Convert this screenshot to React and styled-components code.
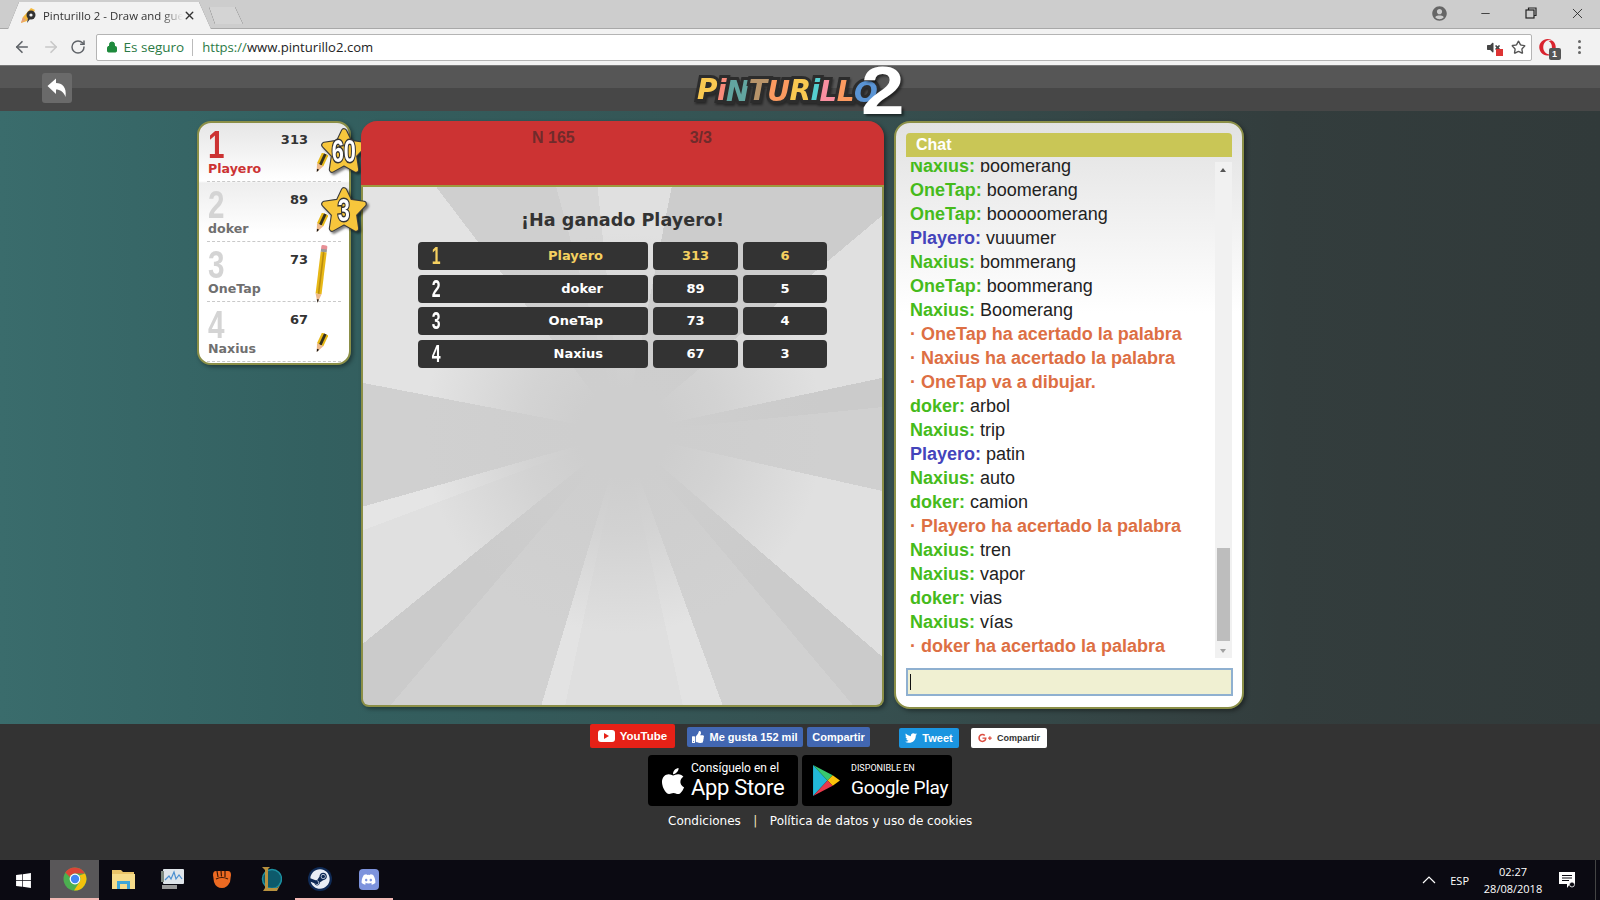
import styled, { createGlobalStyle } from "styled-components";
import { ArrowLeft, ArrowRight, RotateCw, Star as StarIcon, Lock, Minus, X } from "lucide-react";
import {
  FaThumbsUp,
  FaTwitter,
  FaApple,
  FaGooglePlusG,
  FaWindows,
  FaSteam,
  FaDiscord,
  FaUserCircle,
  FaOpera,
  FaVolumeMute,
} from "react-icons/fa";

const players = [
  { rank: 1, name: "Playero", score: 313, wins: 6, star: 60, pencil: "small" },
  { rank: 2, name: "doker", score: 89, wins: 5, star: 3, pencil: "small" },
  { rank: 3, name: "OneTap", score: 73, wins: 4, pencil: "long" },
  { rank: 4, name: "Naxius", score: 67, wins: 3, pencil: "small" },
];

const chat = [
  ["Naxius", "boomerang"],
  ["OneTap", "boomerang"],
  ["OneTap", "booooomerang"],
  ["Playero", "vuuumer"],
  ["Naxius", "bommerang"],
  ["OneTap", "boommerang"],
  ["Naxius", "Boomerang"],
  [null, "OneTap ha acertado la palabra"],
  [null, "Naxius ha acertado la palabra"],
  [null, "OneTap va a dibujar."],
  ["doker", "arbol"],
  ["Naxius", "trip"],
  ["Playero", "patin"],
  ["Naxius", "auto"],
  ["doker", "camion"],
  [null, "Playero ha acertado la palabra"],
  ["Naxius", "tren"],
  ["Naxius", "vapor"],
  ["doker", "vias"],
  ["Naxius", "vías"],
  [null, "doker ha acertado la palabra"],
];

const logoLetters = [
  ["P", "#f9c851", -1],
  ["i", "#f98a7a", 0],
  ["N", "#62a5a0", 1],
  ["T", "#b8946a", 0],
  ["U", "#fb9a60", 1],
  ["R", "#f9c851", 0],
  ["i", "#55cfd0", 0],
  ["L", "#f98fa0", 1],
  ["L", "#fb9a60", 1],
  ["O", "#5a94d4", 2],
];

const GlobalStyle = createGlobalStyle`
  html, body { margin: 0; padding: 0; background: #333; }
  * { box-sizing: border-box; }
`;

const Page = styled.div`
  width: 1600px;
  height: 900px;
  overflow: hidden;
  display: flex;
  flex-direction: column;
  font-family: "Liberation Sans", Arial, sans-serif;
`;

/* browser chrome */
const TabStrip = styled.div`
  height: 29px;
  background: #cdcdcd;
  border-bottom: 1px solid #a8a8a8;
  display: flex;
  align-items: flex-end;
  padding-left: 8px;
  color: #333;
`;

const TabEdge = styled.div`
  filter: drop-shadow(0 0 0.6px #555);
  margin-bottom: -1px;
`;

const Tab = styled.div`
  width: 203px;
  height: 27px;
  background: #f2f2f2;
  clip-path: polygon(0 100%, 11px 0, 191px 0, 203px 100%);
  display: flex;
  align-items: center;
  padding: 0 15px 0 12px;
  font: 11.4px "Open Sans", sans-serif;
  color: #333;
`;

const TabTitle = styled.span`
  flex: 1;
  margin-left: 5px;
  white-space: nowrap;
  overflow: hidden;
  -webkit-mask-image: linear-gradient(90deg, #000 85%, transparent);
  mask-image: linear-gradient(90deg, #000 85%, transparent);
`;

const NewTabEdge = styled.div`
  filter: drop-shadow(0 0 0.7px #333);
  margin: 0 0 4px -2px;
`;

const NewTab = styled.div`
  width: 34px;
  height: 17px;
  background: #d4d4d4;
  clip-path: polygon(0 0, 26px 0, 34px 100%, 6px 100%);
`;

const WindowControls = styled.div`
  margin-left: auto;
  align-self: stretch;
  display: flex;
  align-items: center;
  color: #333;
  padding-bottom: 2px;
`;

const WindowButton = styled.div`
  width: 46px;
  display: flex;
  justify-content: center;
  color: ${(p) => p.$color || "#222"};
`;

const RestoreIcon = () => (
  <svg width="12" height="12" viewBox="0 0 12 12" fill="none" stroke="#222" strokeWidth="1.2">
    <rect x="1" y="3" width="8" height="8" />
    <path d="M3.5 3V1H11V8.5H9" />
  </svg>
);

const Toolbar = styled.div`
  height: 37px;
  background: #f2f2f2;
  display: flex;
  align-items: center;
  border-bottom: 1px solid #777;
  padding-left: 13px;
`;

const NavButton = styled.div`
  width: 28.5px;
  display: flex;
  color: ${(p) => (p.$off ? "#c8c8c8" : "#5f6368")};
`;

const Omnibox = styled.div`
  margin-left: -3px;
  width: 1436px;
  height: 27px;
  background: #fff;
  border: 1px solid #b4b4b4;
  border-radius: 2px;
  display: flex;
  align-items: center;
  padding: 0 5px 0 9px;
  font: 13.5px "Open Sans", sans-serif;
`;

const Secure = styled.span`
  color: #2b7a45;
  margin-left: 6px;
  padding-right: 8px;
  border-right: 1px solid #bbb;
  line-height: 17px;
`;

const Url = styled.span`
  margin-left: 9px;
  font-size: 13.1px;
  color: #222;
  & > span {
    color: #2b7a45;
  }
`;

const OmniIcons = styled.div`
  margin-left: auto;
  display: flex;
  align-items: center;
  gap: 11px;
`;

const MuteIcon = styled.div`
  position: relative;
  display: flex;
  color: #444;
  & > span {
    position: absolute;
    right: -3px;
    bottom: -2px;
    width: 7px;
    height: 7px;
    background: #d33;
  }
`;

const ExtensionButton = styled.div`
  position: relative;
  margin-left: 7px;
  display: flex;
  color: #d9232e;
`;

const ExtensionBadge = styled.span`
  position: absolute;
  left: 10px;
  top: 9px;
  width: 12px;
  height: 12px;
  background: #555;
  color: #fff;
  border-radius: 2px;
  font: bold 9px/12px "Liberation Sans", sans-serif;
  text-align: center;
`;

const MenuDots = styled.div`
  margin-left: 22px;
  display: flex;
  flex-direction: column;
  gap: 2.5px;
  & > i {
    width: 3px;
    height: 3px;
    border-radius: 50%;
    background: #666;
  }
`;

/* game header */
const Header = styled.div`
  height: 45px;
  flex: none;
  background: linear-gradient(#565656 0, #565656 22px, #474747 22px, #474747 100%);
  padding: 7px 0 0 42px;
  position: relative;
  z-index: 5;
`;

const BackButton = styled.div`
  width: 30px;
  height: 30px;
  background: #6a6a6a;
  border-radius: 3px;
  display: flex;
  align-items: center;
  justify-content: center;
`;

const ReplyIcon = () => (
  <svg width="20" height="20" viewBox="0 0 20 20">
    <path d="M0.5 8 L9 0.5 V5 C15 5 20 9 18.5 19 C16.5 13.5 13 11.5 9 11.5 V16 Z" fill="#fff" />
  </svg>
);

const Logo = styled.div`
  position: absolute;
  left: 697px;
  top: 0;
  height: 54px;
  display: flex;
  align-items: flex-start;
`;

const LogoWord = styled.div`
  margin-top: 9px;
  display: flex;
  font: italic bold 28px/32px "DejaVu Sans", sans-serif;
  white-space: nowrap;
  filter: drop-shadow(1px 2px 1px rgba(0, 0, 0, 0.45));
`;

const LogoLetter = styled.span`
  color: ${(p) => p.$color};
  paint-order: stroke fill;
  -webkit-text-stroke: 6px #2c2c2c;
  margin-right: -0.6px;
  transform: translateY(${(p) => p.$drop}px);
`;

const LogoTwo = styled.div`
  margin: -10px 0 0 -16px;
  font: bold 68px/68px "Liberation Sans", sans-serif;
  color: #fff;
  transform: scaleX(1.15);
  transform-origin: left center;
  filter: drop-shadow(2px 2px 1px rgba(0, 0, 0, 0.5));
`;

/* stage */
const Stage = styled.div`
  height: 613px;
  flex: none;
  background: linear-gradient(90deg, #3a6c6c 0, #336060 20%, #364f4f 55%, #333d3d 80%, #313a3a 100%);
  display: flex;
  align-items: flex-start;
  padding: 10px 0 0 197px;
`;

const PlayersPanel = styled.div`
  width: 154px;
  height: 244px;
  border: 2px solid #8b8f47;
  border-radius: 14px;
  background: linear-gradient(#e6e6e6 0, #fff 58px, #eee 60px, #fff 110px);
  box-shadow: 2px 2px 4px rgba(0, 0, 0, 0.4);
  padding: 0 8px;
  position: relative;
`;

const PlayerRow = styled.div`
  position: relative;
  height: 60px;
  padding-top: 1px;
  &:first-child {
    height: 59px;
    padding-top: 0;
  }
  border-bottom: 1px dashed #c9c9c9;
  display: grid;
  grid-template-columns: 65px 36px 25px;
`;

const PlayerInfo = styled.div`
  display: flex;
  flex-direction: column;
  padding: 6px 0 0 1px;
`;

const PlayerRank = styled.div`
  font: bold 38px/32px "Liberation Sans", sans-serif;
  color: ${(p) => (p.$first ? "#cc3333" : "#d4d4d4")};
  height: 32px;
  transform: scaleX(0.78);
  transform-origin: left center;
`;

const PlayerName = styled.div`
  font: bold 12.6px/16px "DejaVu Sans", sans-serif;
  color: ${(p) => (p.$first ? "#cc3333" : "#6f6f6f")};
`;

const PlayerScore = styled.div`
  justify-self: end;
  padding-top: 9px;
  font: bold 13px/16px "DejaVu Sans", sans-serif;
  color: #333;
`;

const PencilSlot = styled.div`
  display: flex;
  justify-content: center;
  align-items: flex-end;
  padding-bottom: ${(p) => (p.$long ? "0" : "8px")};
  margin-bottom: ${(p) => (p.$long ? "-2px" : "0")};
`;

const StarBadge = styled.div`
  position: absolute;
  left: 112px;
  top: 3px;
  width: 50px;
  height: 50px;
  z-index: 2;
  display: flex;
  align-items: center;
  justify-content: center;
  filter: drop-shadow(2px 2px 1px rgba(0, 0, 0, 0.5));
  & > svg {
    position: absolute;
    inset: 0;
  }
`;

const StarValue = styled.span`
  position: relative;
  font: bold 32px/50px "Liberation Sans", sans-serif;
  color: #fff;
  paint-order: stroke fill;
  -webkit-text-stroke: 3px #333;
  transform: scaleX(0.68);
`;

const CenterPanel = styled.div`
  width: 523px;
  height: 586px;
  margin-left: 10px;
  display: flex;
  flex-direction: column;
  border-radius: 16px 16px 8px 8px;
  box-shadow: 2px 2px 4px rgba(0, 0, 0, 0.4);
`;

const RoundBar = styled.div`
  position: relative;
  z-index: 3;
  height: 66px;
  flex: none;
  background: #cc3333;
  border-bottom: 2px solid #9c9a3e;
  border-radius: 16px 16px 0 0;
  display: flex;
  gap: 115px;
  padding: 8px 0 0 171px;
  font: bold 16px/18px "Liberation Sans", sans-serif;
  color: #702b2b;
`;

const ResultBody = styled.div`
  flex: 1;
  border: 2px solid #8b8f47;
  border-top: 0;
  border-radius: 0 0 8px 8px;
  padding-top: 22px;
  background:
    radial-gradient(circle at 260px 246px, #cecece 0, #cecece 45px, rgba(206, 206, 206, 0.75) 100px, rgba(206, 206, 206, 0) 200px),
    conic-gradient(
      from 0deg at 260px 246px,
      #e0e0e0 0 11.2deg,
      #cccccc 11.2deg 50deg,
      #e0e0e0 50deg 78deg,
      #cbcbcb 78deg 84.3deg,
      #d0d0d0 84.3deg 102.6deg,
      #e0e0e0 102.6deg 130.8deg,
      #cbcbcb 130.8deg 139.8deg,
      #d1d1d1 139.8deg 159.9deg,
      #e3e3e3 159.9deg 167.6deg,
      #dfdfdf 167.6deg 192deg,
      #e3e3e3 192deg 196.7deg,
      #d1d1d1 196.7deg 220.5deg,
      #cbcbcb 220.5deg 231deg,
      #e0e0e0 231deg 249.5deg,
      #e5e5e5 249.5deg 254.2deg,
      #d0d0d0 254.2deg 280.9deg,
      #e3e3e3 280.9deg 322.8deg,
      #cfcfcf 322.8deg 344.8deg,
      #d6d6d6 344.8deg 354.1deg,
      #e0e0e0 354.1deg 360deg
    );
`;

const ResultTitle = styled.div`
  text-align: center;
  font: bold 17.6px/22px "DejaVu Sans", sans-serif;
  color: #333;
  margin-bottom: 11px;
`;

const ResultTable = styled.div`
  margin-left: 55px;
  width: 409px;
  display: grid;
  grid-template-columns: 230px 85px 84px;
  grid-auto-rows: 28px;
  gap: 4.5px 5px;
`;

const ResultCell = styled.div`
  background: #333;
  border-radius: 4px;
  color: ${(p) => (p.$first ? "#f5d060" : "#fff")};
  font: bold 13px/28.5px "DejaVu Sans", sans-serif;
  text-align: center;
`;

const NameCell = styled(ResultCell)`
  display: flex;
  justify-content: space-between;
  padding: 0 45px 0 12px;
`;

const RankDigit = styled.span`
  display: inline-block;
  font: bold 22px/27px "Liberation Sans", sans-serif;
  transform: scale(0.72, 1.1);
`;

const ChatPanel = styled.div`
  width: 350px;
  height: 588px;
  margin-left: 10px;
  border: 2px solid #8b8f47;
  border-radius: 16px;
  background: linear-gradient(#e2e2e2 0, #fff 190px);
  box-shadow: 2px 2px 4px rgba(0, 0, 0, 0.4);
  padding: 10px 10px 0 10px;
  display: flex;
  flex-direction: column;
`;

const ChatTitle = styled.div`
  height: 24px;
  width: 326px;
  flex: none;
  background: #c9c656;
  border-radius: 4px 4px 0 0;
  color: #fff;
  font: bold 16px/24px "Liberation Sans", sans-serif;
  padding-left: 10px;
`;

const ChatBody = styled.div`
  margin-top: 5px;
  height: 496px;
  width: 326px;
  flex: none;
  display: flex;
`;

const ChatLines = styled.div`
  flex: 1;
  overflow: hidden;
  display: flex;
  flex-direction: column;
  justify-content: flex-end;
  padding-left: 4px;
`;

const ChatLine = styled.div`
  flex: none;
  height: 24px;
  font-size: 18px;
  line-height: 24px;
  color: #222;
  white-space: nowrap;
`;

const SystemLine = styled(ChatLine)`
  color: #dd6f44;
  font-weight: bold;
`;

const Sender = styled.b`
  color: ${(p) => (p.$blue ? "#4444bb" : "#46bb1c")};
`;

const Scrollbar = styled.div`
  width: 17px;
  background: #f1f1f1;
  position: relative;
  display: flex;
  flex-direction: column;
  justify-content: flex-end;
  padding: 0 2px 17px;
`;

const ScrollThumb = styled.div`
  height: 93px;
  background: #bdbdbd;
`;

const ScrollArrow = styled.i`
  position: absolute;
  left: 5px;
  ${(p) => (p.$down ? "bottom: 5px;" : "top: 6px;")}
  width: 0;
  height: 0;
  border-left: 3.5px solid transparent;
  border-right: 3.5px solid transparent;
  ${(p) => (p.$down ? "border-top: 4px solid #a0a0a0;" : "border-bottom: 4px solid #555;")}
`;

const ChatInput = styled.div`
  margin-top: 10px;
  width: 327px;
  height: 28px;
  flex: none;
  background: #f0f0d2;
  border: 2px solid #8fb0d0;
  padding: 4px 2px;
`;

const Caret = styled.div`
  width: 1px;
  height: 16px;
  background: #111;
`;

/* footer */
const Footer = styled.div`
  height: 136px;
  flex: none;
  background: #333;
  display: flex;
  flex-direction: column;
`;

const SocialRow = styled.div`
  height: 31px;
  padding-left: 590px;
  display: flex;
  align-items: flex-start;
`;

const SocialButton = styled.div`
  margin-top: ${(p) => p.$top ?? 3}px;
  margin-left: ${(p) => p.$left || 0}px;
  width: ${(p) => p.$w}px;
  height: ${(p) => p.$h || 20}px;
  background: ${(p) => p.$bg};
  color: ${(p) => p.$color || "#fff"};
  border-radius: 2px;
  display: flex;
  align-items: center;
  justify-content: center;
  gap: 5px;
  font: bold ${(p) => p.$size || 11}px "Liberation Sans", sans-serif;
  white-space: nowrap;
`;

const YoutubeMark = styled.span`
  width: 17px;
  height: 12px;
  border-radius: 3px;
  background: #fff;
  display: flex;
  align-items: center;
  justify-content: center;
  &::after {
    content: "";
    border-left: 5px solid #e62117;
    border-top: 3px solid transparent;
    border-bottom: 3px solid transparent;
  }
`;

const StoreRow = styled.div`
  display: flex;
  justify-content: center;
  gap: 4px;
`;

const StoreBadge = styled.div`
  width: 150px;
  height: 51px;
  background: #000;
  border-radius: 4px;
  color: #fff;
  display: flex;
  align-items: center;
  padding-left: ${(p) => p.$pad}px;
  font-family: Roboto, sans-serif;
`;

const StoreText = styled.div`
  margin-left: ${(p) => p.$gap}px;
  display: flex;
  flex-direction: column;
`;

const StoreSmall = styled.span`
  font-size: ${(p) => p.$size}px;
  line-height: 13px;
  white-space: nowrap;
`;

const StoreBig = styled.span`
  font-size: ${(p) => p.$size}px;
  line-height: 25px;
  white-space: nowrap;
  letter-spacing: -0.3px;
`;

const Legal = styled.div`
  margin-top: 6px;
  padding-left: 668px;
  display: flex;
  font: 12px/18px "DejaVu Sans", sans-serif;
  color: #fff;
  & > i {
    font-style: normal;
    margin: 0 12.5px;
    color: #f0e6c0;
  }
`;

/* taskbar */
const Taskbar = styled.div`
  height: 40px;
  flex: none;
  background: #0b0a12;
  display: flex;
  align-items: stretch;
  color: #fff;
`;

const StartButton = styled.div`
  width: 50px;
  display: flex;
  align-items: center;
  justify-content: center;
  padding-right: 3px;
  font-size: 17px;
`;

const TaskItem = styled.div`
  width: 49px;
  display: flex;
  align-items: center;
  justify-content: center;
  background: ${(p) => (p.$active ? "#595759" : "transparent")};
  border-bottom: 2px solid ${(p) => (p.$open ? "#f3b8b4" : "transparent")};
`;

const Tray = styled.div`
  margin-left: auto;
  display: flex;
  align-items: center;
  font: 11px "Open Sans", sans-serif;
`;

const TrayLang = styled.span`
  margin-left: 14px;
`;

const TrayClock = styled.div`
  width: 78px;
  margin-left: 5px;
  text-align: center;
  line-height: 17px;
`;

const TrayNotify = styled.span`
  margin-left: 7px;
  display: flex;
`;

const TrayEnd = styled.div`
  width: 5px;
  align-self: stretch;
  margin-left: 19px;
  border-left: 1px solid #444;
`;

const Favicon = () => (
  <svg width="18" height="18" viewBox="0 0 18 18">
    <path d="M1 16 L3 10 L11 1 L15 3 L7 14 Z" fill="#f5b93a" />
    <path d="M1 16 L3 10 L6 13 Z" fill="#e6a07a" />
    <circle cx="11" cy="8" r="4.5" fill="#333" />
    <circle cx="11" cy="8" r="1.6" fill="#f2f2f2" />
    <path d="M8 11 L7 16 L10 12 Z" fill="#333" />
  </svg>
);

const Pencil = ({ long }) =>
  long ? (
    <svg width="16" height="58" viewBox="0 0 16 58">
      <g transform="rotate(7 8 29)">
        <rect x="5" y="0" width="6" height="5" rx="1.5" fill="#e88f95" />
        <rect x="5" y="4" width="6" height="3" fill="#999" />
        <rect x="5" y="7" width="6" height="42" fill="#e8b816" />
        <rect x="7.2" y="7" width="1.6" height="42" fill="#b98d10" />
        <path d="M5 49 H11 L8 58 Z" fill="#eeb98a" />
        <path d="M6.9 54.5 H9.1 L8 58 Z" fill="#222" />
      </g>
    </svg>
  ) : (
    <svg width="14" height="20" viewBox="0 0 14 20">
      <g transform="rotate(25 7 10)">
        <rect x="3.5" y="0" width="7" height="12" fill="#e8b816" />
        <rect x="5.7" y="0" width="2.8" height="12" fill="#33301f" />
        <path d="M3.5 12 H10.5 L7 20 Z" fill="#eeb98a" />
        <path d="M5.8 17 H8.2 L7 20 Z" fill="#111" />
      </g>
    </svg>
  );

const starPoints = "23,5 28,15.5 41,17.5 32,27 34,40 23,34 12,40 14,27 5,17.5 18,15.5";

const StarShape = () => (
  <svg width="50" height="50" viewBox="0 0 46 46">
    <polygon points={starPoints} fill="#3a3a3a" stroke="#3a3a3a" strokeWidth="6" strokeLinejoin="round" />
    <polygon points={starPoints} fill="#f7c63c" stroke="#f7c63c" strokeWidth="4" strokeLinejoin="round" />
  </svg>
);

const GooglePlayIcon = () => (
  <svg width="27" height="31" viewBox="0 0 26 30">
    <path d="M0 0 L14 15 L0 30 Z" fill="#22b8d8" />
    <path d="M0 0 L19 10 L14 15 Z" fill="#38c96e" />
    <path d="M19 10 L26 15 L19 20 L14 15 Z" fill="#fcc30a" />
    <path d="M0 30 L14 15 L19 20 Z" fill="#e8394c" />
  </svg>
);

const ChromeIcon = () => (
  <svg width="24" height="24" viewBox="0 0 24 24">
    <circle cx="12" cy="12" r="11.5" fill="#4caf50" />
    <path d="M12 .5 A11.5 11.5 0 0 1 22 6.5 H12 A5.5 5.5 0 0 0 6.8 10 L2.3 5.6 A11.5 11.5 0 0 1 12 .5 Z" fill="#db4437" />
    <path d="M22 6.5 A11.5 11.5 0 0 1 11 23.4 L16.5 15 A5.5 5.5 0 0 0 16.4 8.5 Z" fill="#f4c20d" />
    <circle cx="12" cy="12" r="5.4" fill="#fff" />
    <circle cx="12" cy="12" r="4.2" fill="#4285f4" />
  </svg>
);

const FolderIcon = () => (
  <svg width="23" height="20" viewBox="0 0 23 20">
    <path d="M0 1 H9 L11 3 H22 V19 H0 Z" fill="#e9c468" />
    <path d="M0 5 H23 V20 H0 Z" fill="#f6dc8a" />
    <path d="M5 20 V12 H18 V20 H15 V15 H8 V20 Z" fill="#3ea6d8" />
  </svg>
);

const MonitorIcon = () => (
  <svg width="24" height="24" viewBox="0 0 24 24">
    <rect x="1" y="18" width="15" height="4" fill="#9a9a9a" />
    <rect x="2" y="2" width="21" height="15" rx="1" fill="#dfe5ea" />
    <path d="M4 13 L8 9 L10 12 L13 5 L15 12 L18 8 L21 12" fill="none" stroke="#4a8fd0" strokeWidth="1.2" />
    <rect x="0" y="4" width="3" height="11" fill="#7f8a80" />
  </svg>
);

const FistIcon = () => (
  <svg width="20" height="20" viewBox="0 0 20 20">
    <path d="M1 6 Q1 2 4 2 L16 2 Q19 2 19 6 L18 13 Q15 19 10 19 Q4 19 2 13 Z" fill="#ec6a22" />
    <path d="M5 2 L6 8 M9 1.5 L9.5 7.5 M13 2 L13 8 M4 10 Q10 7 16 10" stroke="#3a1705" strokeWidth="1.2" fill="none" />
  </svg>
);

const LeagueIcon = () => (
  <svg width="22" height="26" viewBox="0 0 22 26">
    <circle cx="12" cy="13" r="9.5" fill="#0d5a6b" stroke="#1c8fa0" strokeWidth="1.5" />
    <path d="M2 1 H10 L8 3 V22 H17 L20 19 L17 25 H3 L5 22 V4 Z" fill="#b8923f" />
  </svg>
);

const SteamBadge = styled.div`
  width: 24px;
  height: 24px;
  border-radius: 50%;
  background: #0f2a55;
  color: #e8edf5;
  display: flex;
  align-items: center;
  justify-content: center;
  font-size: 20px;
`;

const DiscordBadge = styled.div`
  width: 20px;
  height: 21px;
  border-radius: 4px;
  background: #7d93dd;
  color: #fff;
  display: flex;
  align-items: center;
  justify-content: center;
  font-size: 15px;
`;

const NotifyIcon = () => (
  <svg width="17" height="16" viewBox="0 0 17 16">
    <path d="M0 0 H16 V12 H11 L8 16 V12 H0 Z" fill="#fff" />
    <path d="M3 3.5 H13 M3 6 H13 M3 8.5 H10" stroke="#0b0a12" strokeWidth="1" />
    <circle cx="13" cy="12.5" r="2.5" fill="#0b0a12" stroke="#fff" strokeWidth=".8" />
  </svg>
);

const App = () => {
  return (
    <Page>
      <GlobalStyle />
      <TabStrip>
        <TabEdge>
          <Tab>
            <Favicon />
            <TabTitle>Pinturillo 2 - Draw and guess</TabTitle>
            <X size={13} strokeWidth={2.6} color="#333" />
          </Tab>
        </TabEdge>
        <NewTabEdge>
          <NewTab />
        </NewTabEdge>
        <WindowControls>
          <WindowButton $color="#666">
            <FaUserCircle size={15} />
          </WindowButton>
          <WindowButton>
            <Minus size={13} strokeWidth={1.5} />
          </WindowButton>
          <WindowButton>
            <RestoreIcon />
          </WindowButton>
          <WindowButton>
            <X size={17} strokeWidth={1.2} />
          </WindowButton>
        </WindowControls>
      </TabStrip>
      <Toolbar>
        <NavButton>
          <ArrowLeft size={18} strokeWidth={2.2} />
        </NavButton>
        <NavButton $off>
          <ArrowRight size={18} strokeWidth={2.2} />
        </NavButton>
        <NavButton>
          <RotateCw size={16} strokeWidth={2.2} />
        </NavButton>
        <Omnibox>
          <Lock size={12} color="#1e8a3c" fill="#1e8a3c" strokeWidth={2} />
          <Secure>Es seguro</Secure>
          <Url>
            <span>https://</span>www.pinturillo2.com
          </Url>
          <OmniIcons>
            <MuteIcon>
              <FaVolumeMute size={13} />
              <span />
            </MuteIcon>
            <StarIcon size={15} color="#555" strokeWidth={2.2} />
          </OmniIcons>
        </Omnibox>
        <ExtensionButton>
          <FaOpera size={17} />
          <ExtensionBadge>1</ExtensionBadge>
        </ExtensionButton>
        <MenuDots>
          <i />
          <i />
          <i />
        </MenuDots>
      </Toolbar>

      <Header>
        <BackButton>
          <ReplyIcon />
        </BackButton>
        <Logo>
          <LogoWord>
            {logoLetters.map(([letter, color, drop], i) => (
              <LogoLetter key={i} $color={color} $drop={drop}>
                {letter}
              </LogoLetter>
            ))}
          </LogoWord>
          <LogoTwo>2</LogoTwo>
        </Logo>
      </Header>

      <Stage>
        <PlayersPanel>
          {players.map((p) => (
            <PlayerRow key={p.rank}>
              <PlayerInfo>
                <PlayerRank $first={p.rank === 1}>{p.rank}</PlayerRank>
                <PlayerName $first={p.rank === 1}>{p.name}</PlayerName>
              </PlayerInfo>
              <PlayerScore>{p.score}</PlayerScore>
              <PencilSlot $long={p.pencil === "long"}>
                <Pencil long={p.pencil === "long"} />
              </PencilSlot>
              {p.star && (
                <StarBadge>
                  <StarShape />
                  <StarValue>{p.star}</StarValue>
                </StarBadge>
              )}
            </PlayerRow>
          ))}
        </PlayersPanel>

        <CenterPanel>
          <RoundBar>
            <span>N 165</span>
            <span>3/3</span>
          </RoundBar>
          <ResultBody>
            <ResultTitle>¡Ha ganado Playero!</ResultTitle>
            <ResultTable>
              {players.flatMap((p) => [
                <NameCell key={p.name} $first={p.rank === 1}>
                  <RankDigit>{p.rank}</RankDigit>
                  <span>{p.name}</span>
                </NameCell>,
                <ResultCell key={p.name + "score"} $first={p.rank === 1}>
                  {p.score}
                </ResultCell>,
                <ResultCell key={p.name + "wins"} $first={p.rank === 1}>
                  {p.wins}
                </ResultCell>,
              ])}
            </ResultTable>
          </ResultBody>
        </CenterPanel>

        <ChatPanel>
          <ChatTitle>Chat</ChatTitle>
          <ChatBody>
            <ChatLines>
              {chat.map(([who, text], i) =>
                who ? (
                  <ChatLine key={i}>
                    <Sender $blue={who === "Playero"}>{who}:</Sender> {text}
                  </ChatLine>
                ) : (
                  <SystemLine key={i}>· {text}</SystemLine>
                )
              )}
            </ChatLines>
            <Scrollbar>
              <ScrollArrow />
              <ScrollThumb />
              <ScrollArrow $down />
            </Scrollbar>
          </ChatBody>
          <ChatInput>
            <Caret />
          </ChatInput>
        </ChatPanel>
      </Stage>

      <Footer>
        <SocialRow>
          <SocialButton $w={85} $h={24} $top={0} $bg="#e62117" $size={11.5}>
            <YoutubeMark />
            YouTube
          </SocialButton>
          <SocialButton $w={116} $left={12} $bg="#4267b2">
            <FaThumbsUp size={12} />
            Me gusta 152 mil
          </SocialButton>
          <SocialButton $w={63} $left={4} $bg="#4267b2">
            Compartir
          </SocialButton>
          <SocialButton $w={60} $left={29} $top={4} $bg="#1b95e0">
            <FaTwitter size={12} />
            Tweet
          </SocialButton>
          <SocialButton $w={76} $left={12} $top={4} $bg="#fff" $color="#333" $size={9}>
            <FaGooglePlusG size={14} color="#dc4e41" />
            Compartir
          </SocialButton>
        </SocialRow>
        <StoreRow>
          <StoreBadge $pad={10}>
            <FaApple size={30} />
            <StoreText $gap={3}>
              <StoreSmall $size={12}>Consíguelo en el</StoreSmall>
              <StoreBig $size={22}>App Store</StoreBig>
            </StoreText>
          </StoreBadge>
          <StoreBadge $pad={11}>
            <GooglePlayIcon />
            <StoreText $gap={11}>
              <StoreSmall $size={9}>DISPONIBLE EN</StoreSmall>
              <StoreBig $size={19}>Google Play</StoreBig>
            </StoreText>
          </StoreBadge>
        </StoreRow>
        <Legal>
          <span>Condiciones</span>
          <i>|</i>
          <span>Política de datos y uso de cookies</span>
        </Legal>
      </Footer>

      <Taskbar>
        <StartButton>
          <FaWindows />
        </StartButton>
        <TaskItem $active $open>
          <ChromeIcon />
        </TaskItem>
        <TaskItem>
          <FolderIcon />
        </TaskItem>
        <TaskItem>
          <MonitorIcon />
        </TaskItem>
        <TaskItem>
          <FistIcon />
        </TaskItem>
        <TaskItem>
          <LeagueIcon />
        </TaskItem>
        <TaskItem $open>
          <SteamBadge>
            <FaSteam />
          </SteamBadge>
        </TaskItem>
        <TaskItem $open>
          <DiscordBadge>
            <FaDiscord />
          </DiscordBadge>
        </TaskItem>
        <Tray>
          <svg width="14" height="8" viewBox="0 0 14 8" fill="none" stroke="#fff" strokeWidth="1.2">
            <path d="M1 7 L7 1 L13 7" />
          </svg>
          <TrayLang>ESP</TrayLang>
          <TrayClock>
            02:27
            <br />
            28/08/2018
          </TrayClock>
          <TrayNotify>
            <NotifyIcon />
          </TrayNotify>
          <TrayEnd />
        </Tray>
      </Taskbar>
    </Page>
  );
};

export default App;
